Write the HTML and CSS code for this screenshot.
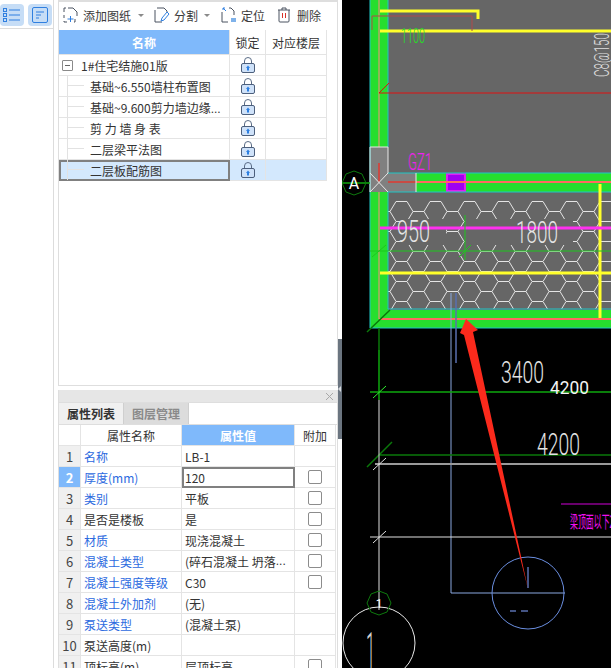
FILE: index.html
```html
<!DOCTYPE html>
<html lang="zh">
<head>
<meta charset="utf-8">
<title>图纸管理</title>
<link rel="stylesheet" href="styles.css">
</head>
<body>
<div class="app">
  <aside class="rail">
    <div class="rail-bar">
      <button class="rail-btn">
        <svg class="ico" width="20" height="16" viewBox="0 0 20 16"><rect class="s-blue" x="1.500" y="1.500" width="3" height="3"/><rect class="s-blue" x="1.500" y="6.500" width="3" height="3"/><rect class="s-blue" x="1.500" y="11.500" width="3" height="3"/><path class="s-blue" d="M7 3h11M7 8h11M7 13h11"/></svg>
      </button>
      <button class="rail-btn">
        <svg class="ico" width="16" height="16" viewBox="0 0 16 16"><rect class="s-blue" x="0.500" y="0.500" width="15" height="15" rx="1.500"/><path class="s-blue" d="M4 5h8M4 8h5M4 11h3"/></svg>
      </button>
    </div>
  </aside>

  <main class="side">
    <section class="drawings">
      <div class="toolbar">
        <div class="tool">
          <svg class="ico" width="15" height="16" viewBox="0 0 15 16"><path class="s-dark" d="M5 1H10l4 4v4M1 5V1h2M1 8v3M1 14v1h3M12 12v3h-1"/><path class="s-blue" d="M7.500 9v6M4.500 12h6"/></svg>
          <span>添加图纸</span>
          <i class="caret"></i>
        </div>
        <div class="tool tool-b">
          <svg class="ico" width="16" height="16" viewBox="0 0 16 16"><path class="s-dark" d="M3 1H10l3 3v1M1 3v12h7"/><path class="s-blue" d="M7 14l1-3 5-6 2 2-5 6z"/></svg>
          <span>分割</span>
          <i class="caret"></i>
        </div>
        <div class="tool tool-c">
          <svg class="ico" width="16" height="16" viewBox="0 0 16 16"><path class="s-dark" d="M8 1h2l3 3v4M1 5v10h6"/><path class="s-blue" d="M2 1l3 3M2 1h2M2 1v2"/><rect class="f-blue" x="10" y="11" width="5" height="4"/></svg>
          <span>定位</span>
        </div>
        <div class="tool tool-d">
          <svg class="ico" width="14" height="16" viewBox="0 0 14 16"><path class="s-dark" d="M1 3h12M5 3V1h4v2M2 3v11q0 1 1 1h8q1 0 1-1V3"/><path class="s-red" d="M5.500 6v5M8.500 6v5"/></svg>
          <span>删除</span>
        </div>
      </div>

      <div class="tree">
        <div class="tree-row tree-head">
          <div class="cell head-on">名称</div>
          <div class="cell c">锁定</div>
          <div class="cell c">对应楼层</div>
        </div>
        <div class="tree-row">
          <div class="cell root"><i class="minus"></i>1#住宅结施01版</div>
          <div class="cell c"><svg class="lock" width="14" height="16" viewBox="0 0 14 16"><path class="lock-hook" d="M3.500 7V4a3.500 3.500 0 0 1 7 0v3"/><rect class="lock-body" x="0.500" y="6.500" width="13" height="9" rx="1.500"/><path class="lock-arrow" d="M7 8.500l2 2.500H8v2.500H6V11H5z"/></svg></div>
          <div class="cell"></div>
        </div>
        <div class="tree-row">
          <div class="cell leaf"><span class="name">基础~6.550墙柱布置图</span></div>
          <div class="cell c"><svg class="lock" width="14" height="16" viewBox="0 0 14 16"><path class="lock-hook" d="M3.500 7V4a3.500 3.500 0 0 1 7 0v3"/><rect class="lock-body" x="0.500" y="6.500" width="13" height="9" rx="1.500"/><path class="lock-arrow" d="M7 8.500l2 2.500H8v2.500H6V11H5z"/></svg></div>
          <div class="cell"></div>
        </div>
        <div class="tree-row">
          <div class="cell leaf"><span class="name">基础~9.600剪力墙边缘<span class="dots">...</span></span></div>
          <div class="cell c"><svg class="lock" width="14" height="16" viewBox="0 0 14 16"><path class="lock-hook" d="M3.500 7V4a3.500 3.500 0 0 1 7 0v3"/><rect class="lock-body" x="0.500" y="6.500" width="13" height="9" rx="1.500"/><path class="lock-arrow" d="M7 8.500l2 2.500H8v2.500H6V11H5z"/></svg></div>
          <div class="cell"></div>
        </div>
        <div class="tree-row">
          <div class="cell leaf"><span class="name">剪 力 墙 身 表</span></div>
          <div class="cell c"><svg class="lock" width="14" height="16" viewBox="0 0 14 16"><path class="lock-hook" d="M3.500 7V4a3.500 3.500 0 0 1 7 0v3"/><rect class="lock-body" x="0.500" y="6.500" width="13" height="9" rx="1.500"/><path class="lock-arrow" d="M7 8.500l2 2.500H8v2.500H6V11H5z"/></svg></div>
          <div class="cell"></div>
        </div>
        <div class="tree-row">
          <div class="cell leaf"><span class="name">二层梁平法图</span></div>
          <div class="cell c"><svg class="lock" width="14" height="16" viewBox="0 0 14 16"><path class="lock-hook" d="M3.500 7V4a3.500 3.500 0 0 1 7 0v3"/><rect class="lock-body" x="0.500" y="6.500" width="13" height="9" rx="1.500"/><path class="lock-arrow" d="M7 8.500l2 2.500H8v2.500H6V11H5z"/></svg></div>
          <div class="cell"></div>
        </div>
        <div class="tree-row selected">
          <div class="cell leaf focus"><span class="name">二层板配筋图</span></div>
          <div class="cell c"><svg class="lock" width="14" height="16" viewBox="0 0 14 16"><path class="lock-hook" d="M3.500 7V4a3.500 3.500 0 0 1 7 0v3"/><rect class="lock-body" x="0.500" y="6.500" width="13" height="9" rx="1.500"/><path class="lock-arrow" d="M7 8.500l2 2.500H8v2.500H6V11H5z"/></svg></div>
          <div class="cell"></div>
        </div>
      </div>
    </section>

    <section class="props">
      <div class="props-title"><svg class="close" width="9" height="9" viewBox="0 0 9 9"><path d="M1 1l7 7M8 1l-7 7"/></svg></div>
      <div class="tabs">
        <div class="tab tab-on">属性列表</div>
        <div class="tab">图层管理</div>
      </div>
      <div class="grid">
        <div class="p-row p-head"><div class="cell"></div><div class="cell c">属性名称</div><div class="cell c head-on">属性值</div><div class="cell c">附加</div></div>
        <div class="p-row"><div class="cell num">1</div><div class="cell link">名称</div><div class="cell val">LB-1</div><div class="cell c"></div></div>
        <div class="p-row"><div class="cell num num-on">2</div><div class="cell link">厚度(mm)</div><div class="cell val focus">120</div><div class="cell c"><i class="check"></i></div></div>
        <div class="p-row"><div class="cell num">3</div><div class="cell link">类别</div><div class="cell val">平板</div><div class="cell c"><i class="check"></i></div></div>
        <div class="p-row"><div class="cell num">4</div><div class="cell">是否是楼板</div><div class="cell val">是</div><div class="cell c"><i class="check"></i></div></div>
        <div class="p-row"><div class="cell num">5</div><div class="cell link">材质</div><div class="cell val">现浇混凝土</div><div class="cell c"><i class="check"></i></div></div>
        <div class="p-row"><div class="cell num">6</div><div class="cell link">混凝土类型</div><div class="cell val">(碎石混凝土 坍落<span class="dots">...</span></div><div class="cell c"><i class="check"></i></div></div>
        <div class="p-row"><div class="cell num">7</div><div class="cell link">混凝土强度等级</div><div class="cell val">C30</div><div class="cell c"><i class="check"></i></div></div>
        <div class="p-row"><div class="cell num">8</div><div class="cell link">混凝土外加剂</div><div class="cell val">(无)</div><div class="cell c"></div></div>
        <div class="p-row"><div class="cell num">9</div><div class="cell link">泵送类型</div><div class="cell val">(混凝土泵)</div><div class="cell c"></div></div>
        <div class="p-row"><div class="cell num">10</div><div class="cell">泵送高度(m)</div><div class="cell val"></div><div class="cell c"></div></div>
        <div class="p-row"><div class="cell num">11</div><div class="cell">顶标高(m)</div><div class="cell val">层顶标高</div><div class="cell c"><i class="check"></i></div></div>
      </div>
    </section>
  </main>

  <div class="split"><div class="split-handle"></div></div>

  <div class="cad">
    <svg class="drawing" width="269" height="668" viewBox="342 0 269 668">
      <defs>
        <pattern id="hex" width="34" height="20" patternUnits="userSpaceOnUse" x="390" y="201">
          <path class="hex-line" d="M0 10.500L6 0.500H17L23 10.500L17 20.500H6ZM23 10.500H34"/>
        </pattern>
      </defs>
      <!-- slab -->
      <rect class="gray" x="388" y="0" width="223" height="310"/>
      <rect class="green" x="370" y="0" width="18" height="147"/>
      <rect class="green" x="370" y="192" width="18" height="136"/>
      <rect class="green" x="416" y="173" width="195" height="19"/>
      <rect class="green" x="370" y="310" width="241" height="18"/>
      <rect class="gray-light" x="370" y="147" width="18" height="45"/>
      <rect class="gray-light" x="388" y="173" width="28" height="19"/>
      <rect class="hatch" x="388" y="201" width="223" height="108"/>
      <rect class="gray" x="400" y="219" width="46" height="26"/>
      <rect class="gray" x="465" y="219" width="108" height="26"/>
      <rect class="gray" x="388" y="192" width="223" height="9"/>
      <rect class="purple" x="447" y="174" width="18" height="17"/>
      <path class="cyan" d="M370 0V328H611M388 0V147M388 192V309H611M388 173H611M388 192H611"/>
      <path class="salmon" d="M416 182H611M379 319H611"/>
      <path class="salmon-thin" d="M379 0V147M379 192V319"/>
      <path class="salmon-2" d="M379 163V182M388 182H416"/>
      <path class="white-2" d="M370 147H388V173M370 147V192M370 173L388 192M388 173L370 192M416 173V192"/>
      <!-- rebar -->
      <path class="yellow" d="M380 11H478V19M380 31H611M380 273H611M600 184V318"/>
      <path class="magenta-bar" d="M380 228H611"/>
      <path class="red-thin" d="M372 30V16H472V31"/>
      <path class="red-line" d="M379 93H611M379 93L389 83"/>
      <path class="green-thin" d="M370 251H611M465 215V260M459 257L471 245M372 257L386 245"/>
      <path class="blue-line" d="M451 293V593H565"/>
      <path class="blue-dark" d="M456 293V363"/>
      <circle class="blue-circle" cx="528" cy="593" r="36"/>
      <path class="blue-dark" d="M510 611H516M521 611H528M528 567V588"/>
      <!-- axes -->
      <path class="axis-green" d="M342 183H370M379 350V400M370 392H611"/>
      <path class="axis-bright" d="M373 398L386 386"/>
      <path class="axis-dark" d="M380 455H611M367 467L392 442M379 328V350M367 332L390 310"/>
      <path class="axis-gray" d="M375 464H611"/>
      <path class="axis-white" d="M379 400V610M370 537H611M373 470L386 458M373 543L386 531"/>
      <circle class="axis-circle" cx="379" cy="643" r="36"/>
      <polygon class="oct" points="354,171 362,174 366,183 362,192 354,195 346,192 342,183 346,174"/>
      <polygon class="oct" points="379,591 387,594 391,603 387,612 379,615 371,612 367,603 371,594"/>
      <path class="magenta-thin" d="M561 504H611"/>
      <!-- texts -->
      <text class="t t-green" x="401" y="43" textLength="24" lengthAdjust="spacingAndGlyphs">1100</text>
      <text class="t t-light t-rot" transform="translate(609,77) rotate(-90)" textLength="44" lengthAdjust="spacingAndGlyphs">C8@150</text>
      <text class="t t-mag" x="408" y="170" textLength="24" lengthAdjust="spacingAndGlyphs">GZ1</text>
      <text class="t t-a" x="354" y="189" text-anchor="middle">A</text>
      <text class="t t-big" x="397" y="242" textLength="33" lengthAdjust="spacingAndGlyphs">950</text>
      <text class="t t-big" x="516" y="243" textLength="42" lengthAdjust="spacingAndGlyphs">1800</text>
      <text class="t t-big" x="501" y="383" textLength="43" lengthAdjust="spacingAndGlyphs">3400</text>
      <text class="t t-dim" x="550" y="394" textLength="39" lengthAdjust="spacingAndGlyphs">4200</text>
      <text class="t t-big" x="537" y="455" textLength="43" lengthAdjust="spacingAndGlyphs">4200</text>
      <text class="t t-cn" x="570" y="528" textLength="44" lengthAdjust="spacingAndGlyphs">梁顶面以下2</text>
      <text class="t t-one" x="379" y="608" text-anchor="middle">1</text>
      <text class="t t-axis" x="366" y="668" textLength="9" lengthAdjust="spacingAndGlyphs">1</text>
      <!-- arrow -->
      <polygon class="arrow" points="466,319 478,330 473,332 528,589 464,335 460,333"/>
    </svg>
  </div>
</div>
</body>
</html>
```

FILE: styles.css
```css
* { box-sizing: border-box; }
html, body { margin: 0; height: 100%; }
body {
  width: 611px;
  height: 668px;
  overflow: hidden;
  background: #fff;
  font-family: "Noto Sans CJK SC", "Liberation Sans", sans-serif;
  font-size: 12px;
  color: #333;
}
.app { display: flex; width: 611px; height: 668px; }
.ico { display: block; flex: none; }

/* left rail */
.rail {
  width: 54px;
  flex: none;
  border-right: 1px solid #dcdcdc;
  margin-right: 4px;
}
.rail-bar {
  height: 29px;
  padding: 4px 0 0;
  border-bottom: 1px solid #dcdcdc;
  display: flex;
  gap: 4px;
}
.rail-btn {
  width: 24px;
  height: 22px;
  padding: 0;
  border: 0;
  border-radius: 4px;
  background: #c6ddf6;
  display: flex;
  align-items: center;
  justify-content: center;
}
.s-blue { fill: none; stroke: #2f7fe0; stroke-width: 1; }
.s-dark { fill: none; stroke: #4a5360; stroke-width: 1; }
.s-red { fill: none; stroke: #d8322a; stroke-width: 1; }
.f-blue { fill: #7fb2ea; }

/* side column */
.side { width: 280px; flex: none; display: flex; flex-direction: column; }
.drawings {
  height: 386px;
  flex: none;
  border: 1px solid #dedede;
  border-top-width: 2px;
  margin-bottom: 4px;
}
.toolbar {
  height: 28px;
  display: flex;
  align-items: center;
  padding-left: 4px;
  padding-bottom: 2px;
  color: #3a3a3a;
  white-space: nowrap;
}
.tool { display: flex; align-items: center; gap: 5px; flex: none; }
.tool-b { margin-left: 10px; gap: 4px; }
.tool-c { margin-left: 11px; gap: 4px; }
.tool-d { margin-left: 12px; gap: 6px; }
.caret {
  width: 0;
  height: 0;
  margin-left: 2px;
  border: 3px solid transparent;
  border-top: 3px solid #8a8a8a;
  border-bottom: 0;
}

/* tree table */
.tree { width: 268px; }
.tree-row {
  display: grid;
  grid-template-columns: 171px 36px 61px;
  height: 21px;
}
.tree-head { height: 25px; }
.cell {
  display: flex;
  align-items: center;
  min-width: 0;
  border-right: 1px solid #e4e4e4;
  border-bottom: 1px solid #e4e4e4;
  white-space: nowrap;
  overflow: hidden;
  position: relative;
}
.c { justify-content: center; }
.head-on {
  background: #7fb9fb;
  color: #fff;
  font-weight: 700;
  justify-content: center;
}
.root { padding-left: 3px; gap: 8px; }
.minus {
  width: 11px;
  height: 11px;
  flex: none;
  border: 1px solid #8a8a8a;
  border-radius: 1px;
  position: relative;
}
.minus::after {
  content: "";
  position: absolute;
  left: 2px;
  right: 2px;
  top: 4px;
  height: 1px;
  background: #666;
}
.leaf { padding-left: 31px; padding-right: 2px; }
.leaf::before {
  content: "";
  position: absolute;
  left: 8px;
  top: 0;
  bottom: 0;
  width: 1px;
  background: #e2e2e2;
}
.leaf::after {
  content: "";
  position: absolute;
  left: 9px;
  top: 9px;
  width: 16px;
  height: 1px;
  background: #e2e2e2;
}
.name { display: block; }
.dots { font-family: "Liberation Sans", sans-serif; }
.selected .cell { background: #d3e8fd; }
.focus { outline: 2px solid #808080; outline-offset: -2px; }
.lock { display: block; }
.lock-hook { fill: none; stroke: #5a6c86; stroke-width: 1; }
.lock-body { fill: #cfe2f9; stroke: #4c5f7c; stroke-width: 1; }
.lock-arrow { fill: #2c7fe2; }

/* properties */
.props {
  flex: 1;
  min-height: 0;
  overflow: hidden;
  border-left: 1px solid #dedede;
  border-right: 1px solid #dedede;
}
.props-title {
  height: 12px;
  background: #e6e6e6;
  display: flex;
  justify-content: flex-end;
  align-items: center;
  padding-right: 3px;
}
.close path { fill: none; stroke: #a8a8a8; stroke-width: 1; }
.tabs { display: flex; height: 22px; border-top: 1px solid #dedede; }
.tab {
  width: 65px;
  display: flex;
  align-items: center;
  justify-content: center;
  background: #dcdcdc;
  color: #8a8a8a;
  font-weight: 700;
  border-right: 1px solid #cfcfcf;
}
.tab-on { background: #f0f0f0; color: #333; }
.grid { border-top: 1px solid #dedede; }
.p-row {
  display: grid;
  grid-template-columns: 22px 101px 113px 41px;
  height: 21px;
}
.num { justify-content: center; background: #f0f0f0; color: #444; font-size: 13px; }
.num-on { background: #7fb9fb; color: #fff; font-weight: 700; }
.p-row > .cell:nth-child(2):not(.c) { padding-left: 3px; }
.val { padding: 0 3px; }
.link { color: #2c6ae0; }
.check {
  width: 14px;
  height: 14px;
  border: 1px solid #8c8c8c;
  border-radius: 2px;
  background: #fff;
}

/* splitter */
.split { width: 4px; flex: none; padding-top: 339px; }
.split-handle { width: 4px; height: 100px; background: #6b7580; position: relative; }
.split-handle::after {
  content: "";
  position: absolute;
  left: 0;
  top: 47px;
  border: 3px solid transparent;
  border-right: 3px solid #d5d8dc;
  border-left: 0;
}

/* CAD canvas */
.cad { flex: 1; background: #000; overflow: hidden; }
.drawing { display: block; }
.gray { fill: #666; }
.gray-light { fill: #808080; }
.green { fill: #26de2e; }
.purple { fill: #a000f0; stroke: #e020f0; stroke-width: 2; }
.hatch { fill: url(#hex); }
.hex-line { fill: none; stroke: #e4e4e4; stroke-width: 1; }
.cyan { fill: none; stroke: #1fc6c6; stroke-width: 1; }
.salmon { fill: none; stroke: #ff6a60; stroke-width: 2; }
.salmon-thin { fill: none; stroke: #ff8a80; stroke-width: 1; }
.salmon-2 { fill: none; stroke: #c84a44; stroke-width: 2; }
.white-2 { fill: none; stroke: #e8e8e8; stroke-width: 1; }
.yellow { fill: none; stroke: #ffff2a; stroke-width: 3; }
.magenta-bar { fill: none; stroke: #ff30f0; stroke-width: 3; }
.magenta-thin { fill: none; stroke: #d000d8; stroke-width: 1; }
.red-thin { fill: none; stroke: #b04a4a; stroke-width: 1; }
.red-line { fill: none; stroke: #e01010; stroke-width: 1; }
.green-thin { fill: none; stroke: #1cc81c; stroke-width: 1; }
.blue-line { fill: none; stroke: #8aa8e0; stroke-width: 1; }
.blue-dark { fill: none; stroke: #5a70b0; stroke-width: 1.500; }
.blue-circle { fill: none; stroke: #6a8ee0; stroke-width: 1; }
.axis-green { fill: none; stroke: #0ea80e; stroke-width: 1.500; }
.axis-bright { fill: none; stroke: #30f030; stroke-width: 1; }
.axis-dark { fill: none; stroke: #0a780a; stroke-width: 1.500; }
.axis-gray { fill: none; stroke: #9a9a9a; stroke-width: 2; }
.axis-white { fill: none; stroke: #e0e0e0; stroke-width: 1; }
.oct { fill: none; stroke: #0e7a0e; stroke-width: 1; }
.axis-circle { fill: none; stroke: #e8e8e8; stroke-width: 1; }
.arrow { fill: #fb2a1c; }
.t { font-family: Roboto, "Liberation Sans", sans-serif; font-weight: 300; }
.t-green { fill: #22e022; font-size: 20px; }
.t-light { fill: #e0e0e0; }
.t-rot { font-size: 20px; }
.t-mag { fill: #f020f0; font-size: 24px; }
.t-a { fill: #fff; font-size: 16px; font-weight: 400; }
.t-big { fill: #e4e4e4; font-size: 31px; }
.t-dim { fill: #f4f4f4; font-size: 19px; font-weight: 400; }
.t-cn { fill: #f010f0; font-size: 17px; font-family: "Noto Sans CJK SC", sans-serif; font-weight: 400; }
.t-one { fill: #ffffff; font-size: 12px; font-weight: 400; }
.t-axis { fill: #d0d0d0; font-size: 50px; }
```
